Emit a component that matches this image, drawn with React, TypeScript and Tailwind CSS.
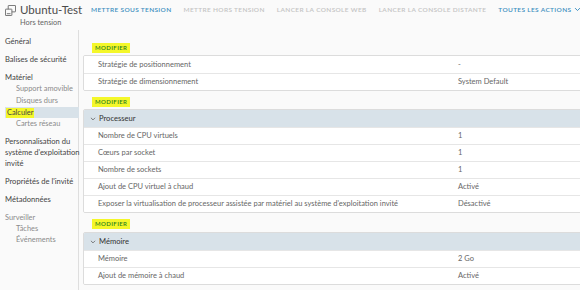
import React from "react";

const font = { fontFamily: "Lato, 'Open Sans', sans-serif" };

function VmIcon() {
  return (
    <svg width="11" height="11" viewBox="0 0 12 12" fill="none" stroke="#6a6a6a" strokeWidth="1">
      <rect x="3.5" y="0.5" width="8" height="7" rx="0.5" />
      <rect x="0.5" y="4.5" width="7" height="7" rx="0.5" fill="#fafafa" />
      <line x1="2" y1="9.5" x2="6" y2="9.5" />
    </svg>
  );
}

function Chevron({ color = "#0079b8", size = 7 }: { color?: string; size?: number }) {
  return (
    <svg width={size} height={size} viewBox="0 0 10 10" fill="none" stroke={color} strokeWidth="1.4">
      <polyline points="1.5,3 5,6.5 8.5,3" />
    </svg>
  );
}

function Modifier() {
  return (
    <div className="h-[12px] flex items-center pl-[9px]">
      <span className="bg-[#f4f72a] px-[3px] text-[6px] leading-[10px] tracking-[0.4px] text-[#2d7f1e] font-semibold">
        MODIFIER
      </span>
    </div>
  );
}

function Row({ label, value }: { label: string; value: string }) {
  return (
    <div className="h-[17px] flex items-center border-t border-[#e6e6e6] bg-white text-[7.5px] text-[#666] whitespace-nowrap">
      <div className="w-[374px] pl-[14px] shrink-0">{label}</div>
      <div>{value}</div>
    </div>
  );
}

function Header({ title }: { title: string }) {
  return (
    <div className="h-[17px] flex items-center bg-[#d8e2e9] text-[7.6px] text-[#333] pl-[6px] gap-[3px]">
      <Chevron color="#666" size={6} />
      <span>{title}</span>
    </div>
  );
}

export default function App() {
  const side = "text-[7.6px] text-[#444] whitespace-nowrap";
  const sub = "text-[7.4px] text-[#8a8a8a] pl-[11px]";
  return (
    <div className="w-[580px] h-[290px] bg-[#fafafa] overflow-hidden" style={font}>
      {/* top bar */}
      <div className="h-[30px] flex">
        <div className="w-[91px] shrink-0 flex pt-[2px] pl-[5px] whitespace-nowrap">
          <div className="pt-[3px]"><VmIcon /></div>
          <div className="pl-[4px]">
            <div className="text-[11.5px] leading-[15px] text-[#4b4b4b]">Ubuntu-Test</div>
            <div className="text-[7.4px] leading-[10px] text-[#666] pt-[1px]">Hors tension</div>
          </div>
        </div>
        <div className="flex items-start pt-[5px] text-[6.5px] tracking-[0.35px] font-semibold gap-[12px] whitespace-nowrap">
          <span className="text-[#3d8fc0]">METTRE SOUS TENSION</span>
          <span className="text-[#c4c4c4]">METTRE HORS TENSION</span>
          <span className="text-[#c4c4c4]">LANCER LA CONSOLE WEB</span>
          <span className="text-[#c4c4c4]">LANCER LA CONSOLE DISTANTE</span>
          <span className="text-[#3d8fc0] flex items-center gap-[3px]">TOUTES LES ACTIONS <Chevron color="#3d8fc0" size={7} /></span>
        </div>
      </div>
      <div className="flex h-[260px]">
        {/* sidebar */}
        <div className="w-[79px] shrink-0 border-r border-[#dedede] pl-[5px] pt-[6px] leading-[11px]">
          <div className={side}>Général</div>
          <div className={`${side} mt-[7px]`}>Balises de sécurité</div>
          <div className={`${side} mt-[7px]`}>Matériel</div>
          <div className={sub}>Support amovible</div>
          <div className={`${sub} mt-[1px]`}>Disques durs</div>
          <div className="bg-[#d8e2e9] -mr-[1px] mt-[1px] pl-[1px] h-[11px] flex items-center">
            <span className="bg-[#f4f72a] text-[7.4px] text-[#444] px-[1px] leading-[10px]">Calculer</span>
          </div>
          <div className={sub}>Cartes réseau</div>
          <div className={`${side} mt-[7px]`}>Personnalisation du<br />système d'exploitation<br />invité</div>
          <div className={`${side} mt-[7px]`}>Propriétés de l'invité</div>
          <div className={`${side} mt-[7px]`}>Métadonnées</div>
          <div className="text-[7.4px] text-[#8a8a8a] mt-[7px]">Surveiller</div>
          <div className={sub}>Tâches</div>
          <div className={sub}>Événements</div>
        </div>
        {/* main */}
        <div className="flex-1 pl-[4px] pt-[12px]">
          <Modifier />
          <div className="mt-[1px] -mr-[4px] border border-[#dcdcdc] rounded-[2px] overflow-hidden [&>div:first-child]:border-t-0">
            <Row label="Stratégie de positionnement" value="-" />
            <Row label="Stratégie de dimensionnement" value="System Default" />
          </div>
          <div className="mt-[5px]"><Modifier /></div>
          <div className="mt-[1px] -mr-[4px] border border-[#dcdcdc] rounded-[2px] overflow-hidden">
            <Header title="Processeur" />
            <Row label="Nombre de CPU virtuels" value="1" />
            <Row label="Cœurs par socket" value="1" />
            <Row label="Nombre de sockets" value="1" />
            <Row label="Ajout de CPU virtuel à chaud" value="Activé" />
            <Row label="Exposer la virtualisation de processeur assistée par matériel au système d'exploitation invité" value="Désactivé" />
          </div>
          <div className="mt-[5px]"><Modifier /></div>
          <div className="mt-[2px] -mr-[4px] border border-[#dcdcdc] rounded-[2px] overflow-hidden">
            <Header title="Mémoire" />
            <Row label="Mémoire" value="2 Go" />
            <Row label="Ajout de mémoire à chaud" value="Activé" />
          </div>
        </div>
      </div>
    </div>
  );
}
